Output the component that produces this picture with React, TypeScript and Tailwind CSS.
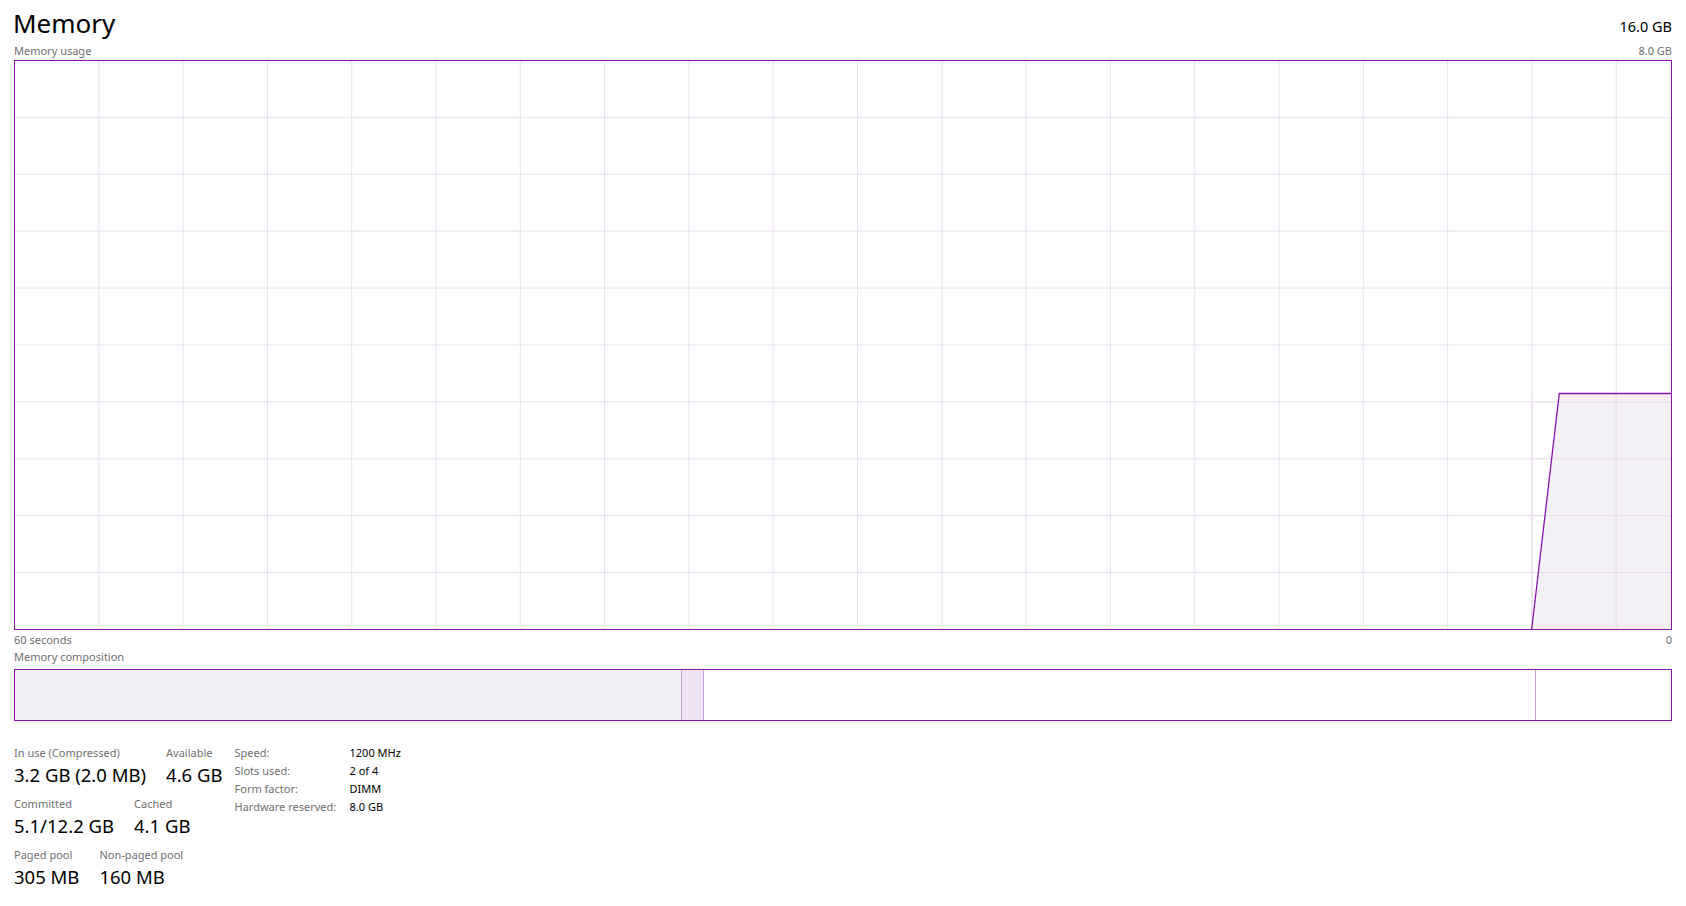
import React from "react";

const PURPLE = "#8b12ae";

function UsageChart() {
  const W = 1656;
  const H = 568;
  const vx: number[] = [];
  for (let k = 1; k <= 19; k++) vx.push(84.3 * k - 0.5);
  const hy: number[] = [];
  for (let k = 1; k <= 9; k++) hy.push(56.9 * k - 0.5);
  return (
    <svg width={W} height={H} viewBox={`0 0 ${W} ${H}`} className="block">
      {vx.map((x) => (
        <line key={"v" + x} x1={x} y1={0} x2={x} y2={H} stroke="#ecdff0" strokeWidth={1} />
      ))}
      {hy.map((y) => (
        <line key={"h" + y} x1={0} y1={y} x2={W} y2={y} stroke="#ecdff0" strokeWidth={1} />
      ))}
      <polygon points={`1516.7,${H} 1544.3,332 ${W},332 ${W},${H}`} fill="#f3f0f5" fillOpacity={0.9} />
      {vx.map((x) =>
        x > 1516 ? <line key={"v2" + x} x1={x} y1={332} x2={x} y2={H} stroke="#e6dbe9" strokeWidth={1} /> : null
      )}
      {hy.map((y) =>
        y > 332 ? (
          <line key={"h2" + y} x1={1520} y1={y} x2={W} y2={y} stroke="#e6dbe9" strokeWidth={1} />
        ) : null
      )}
      <polyline points={`1516.7,${H} 1544.3,332.5 ${W},332.5`} fill="none" stroke={PURPLE} strokeWidth={1.3} />
    </svg>
  );
}

function Stat({ label, value }: { label: string; value: string }) {
  return (
    <div className="flex flex-col">
      <div className="text-[11px] leading-[18px] text-[#707070]">{label}</div>
      <div className="text-[18.5px] leading-[26px] text-black">{value}</div>
    </div>
  );
}

export default function App() {
  return (
    <div
      className="w-[1686px] h-[906px] bg-white px-[14px] overflow-hidden"
      style={{ fontFamily: '"Noto Sans", "Open Sans", sans-serif' }}
    >
      <div className="flex justify-between items-end h-[42px]">
        <div className="text-[26px] leading-[36px] text-black -ml-[1px] mb-[1px]">Memory</div>
        <div className="text-[14.5px] leading-[20px] text-black mb-[6px]">16.0 GB</div>
      </div>
      <div className="flex justify-between h-[18px] text-[11px] leading-[17px] text-[#707070]">
        <span>Memory usage</span>
        <span>8.0 GB</span>
      </div>
      <div className="border border-[#8b12ae] h-[570px] w-[1658px]">
        <UsageChart />
      </div>
      <div className="flex justify-between h-[18px] text-[11px] leading-[19px] text-[#707070]">
        <span>60 seconds</span>
        <span>0</span>
      </div>
      <div className="h-[21px] text-[11px] leading-[18px] text-[#707070]">Memory composition</div>
      <div className="flex border border-[#8b12ae] h-[52px] w-[1658px]">
        <div className="w-[667px] bg-[#f3f0f5] border-r border-[#c9a3d8]" />
        <div className="w-[22px] bg-[#eee4f3] border-r border-[#c9a3d8]" />
        <div className="flex-1 bg-white border-r border-[#c9a3d8]" />
        <div className="w-[135px] bg-white" />
      </div>
      <div className="flex mt-[23px] gap-[12px]">
        <div className="flex flex-col gap-[7px]">
          <div className="flex gap-[20px]">
            <Stat label="In use (Compressed)" value="3.2 GB (2.0 MB)" />
            <Stat label="Available" value="4.6 GB" />
          </div>
          <div className="flex gap-[20px]">
            <Stat label="Committed" value="5.1/12.2 GB" />
            <Stat label="Cached" value="4.1 GB" />
          </div>
          <div className="flex gap-[20px]">
            <Stat label="Paged pool" value="305 MB" />
            <Stat label="Non-paged pool" value="160 MB" />
          </div>
        </div>
        <div className="grid grid-cols-[115px_auto] text-[11px] leading-[18px] content-start">
          <span className="text-[#707070]">Speed:</span>
          <span className="text-black">1200 MHz</span>
          <span className="text-[#707070]">Slots used:</span>
          <span className="text-black">2 of 4</span>
          <span className="text-[#707070]">Form factor:</span>
          <span className="text-black">DIMM</span>
          <span className="text-[#707070]">Hardware reserved:</span>
          <span className="text-black">8.0 GB</span>
        </div>
      </div>
    </div>
  );
}
